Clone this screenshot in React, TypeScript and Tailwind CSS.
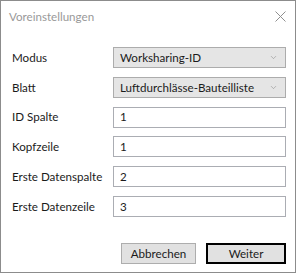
import { ChevronDown } from "lucide-react";

type Row = {
  label: string;
  value: string;
  combo?: boolean;
};

const rows: Row[] = [
  { label: "Modus", value: "Worksharing-ID", combo: true },
  { label: "Blatt", value: "Luftdurchlässe-Bauteilliste", combo: true },
  { label: "ID Spalte", value: "1" },
  { label: "Kopfzeile", value: "1" },
  { label: "Erste Datenspalte", value: "2" },
  { label: "Erste Datenzeile", value: "3" },
];

export default function App() {
  return (
    <div
      className="w-[296px] h-[273px] bg-white border border-[#8c8c8c] flex flex-col text-[11.6px] text-[#1b1b1b]"
      style={{ fontFamily: 'Lato, "Open Sans", sans-serif' }}
    >
      {/* title bar */}
      <div className="h-[31px] flex items-center pl-[8px] pr-[9px] shrink-0">
        <span className="text-[#999999] flex-1 leading-none">Voreinstellungen</span>
        <svg width="11" height="11" viewBox="0 0 11 11" className="text-[#8f8f8f]">
          <path d="M0.5 0.5 L10.5 10.5 M10.5 0.5 L0.5 10.5" stroke="currentColor" strokeWidth="1" />
        </svg>
      </div>

      <div className="flex flex-col gap-[8.8px] pl-[11px] pr-[9px] pt-[15px]">
        {rows.map((r) => (
          <div key={r.label} className="flex items-center h-[21px]">
            <label className="w-[101px] shrink-0 leading-none">{r.label}</label>
            {r.combo ? (
              <div className="flex-1 min-w-0 h-full flex items-center border border-[#acacac] bg-[#e5e5e5] pl-[6px] pr-[7px]">
                <span className="flex-1 whitespace-nowrap leading-none">{r.value}</span>
                <ChevronDown size={9} strokeWidth={1.5} className="text-[#8a8a8a] shrink-0" />
              </div>
            ) : (
              <div className="flex-1 h-full flex items-center border border-[#abadb3] bg-white pl-[6px]">
                <span className="leading-none">{r.value}</span>
              </div>
            )}
          </div>
        ))}
      </div>

      {/* buttons */}
      <div className="flex justify-end gap-[10px] pr-[9px] mt-auto mb-[8px]">
        <button className="w-[75px] h-[21px] bg-[#e1e1e1] border border-[#adadad] leading-none">
          Abbrechen
        </button>
        <button className="w-[80px] h-[21px] bg-[#e1e1e1] border-2 border-black leading-none">
          Weiter
        </button>
      </div>
    </div>
  );
}
